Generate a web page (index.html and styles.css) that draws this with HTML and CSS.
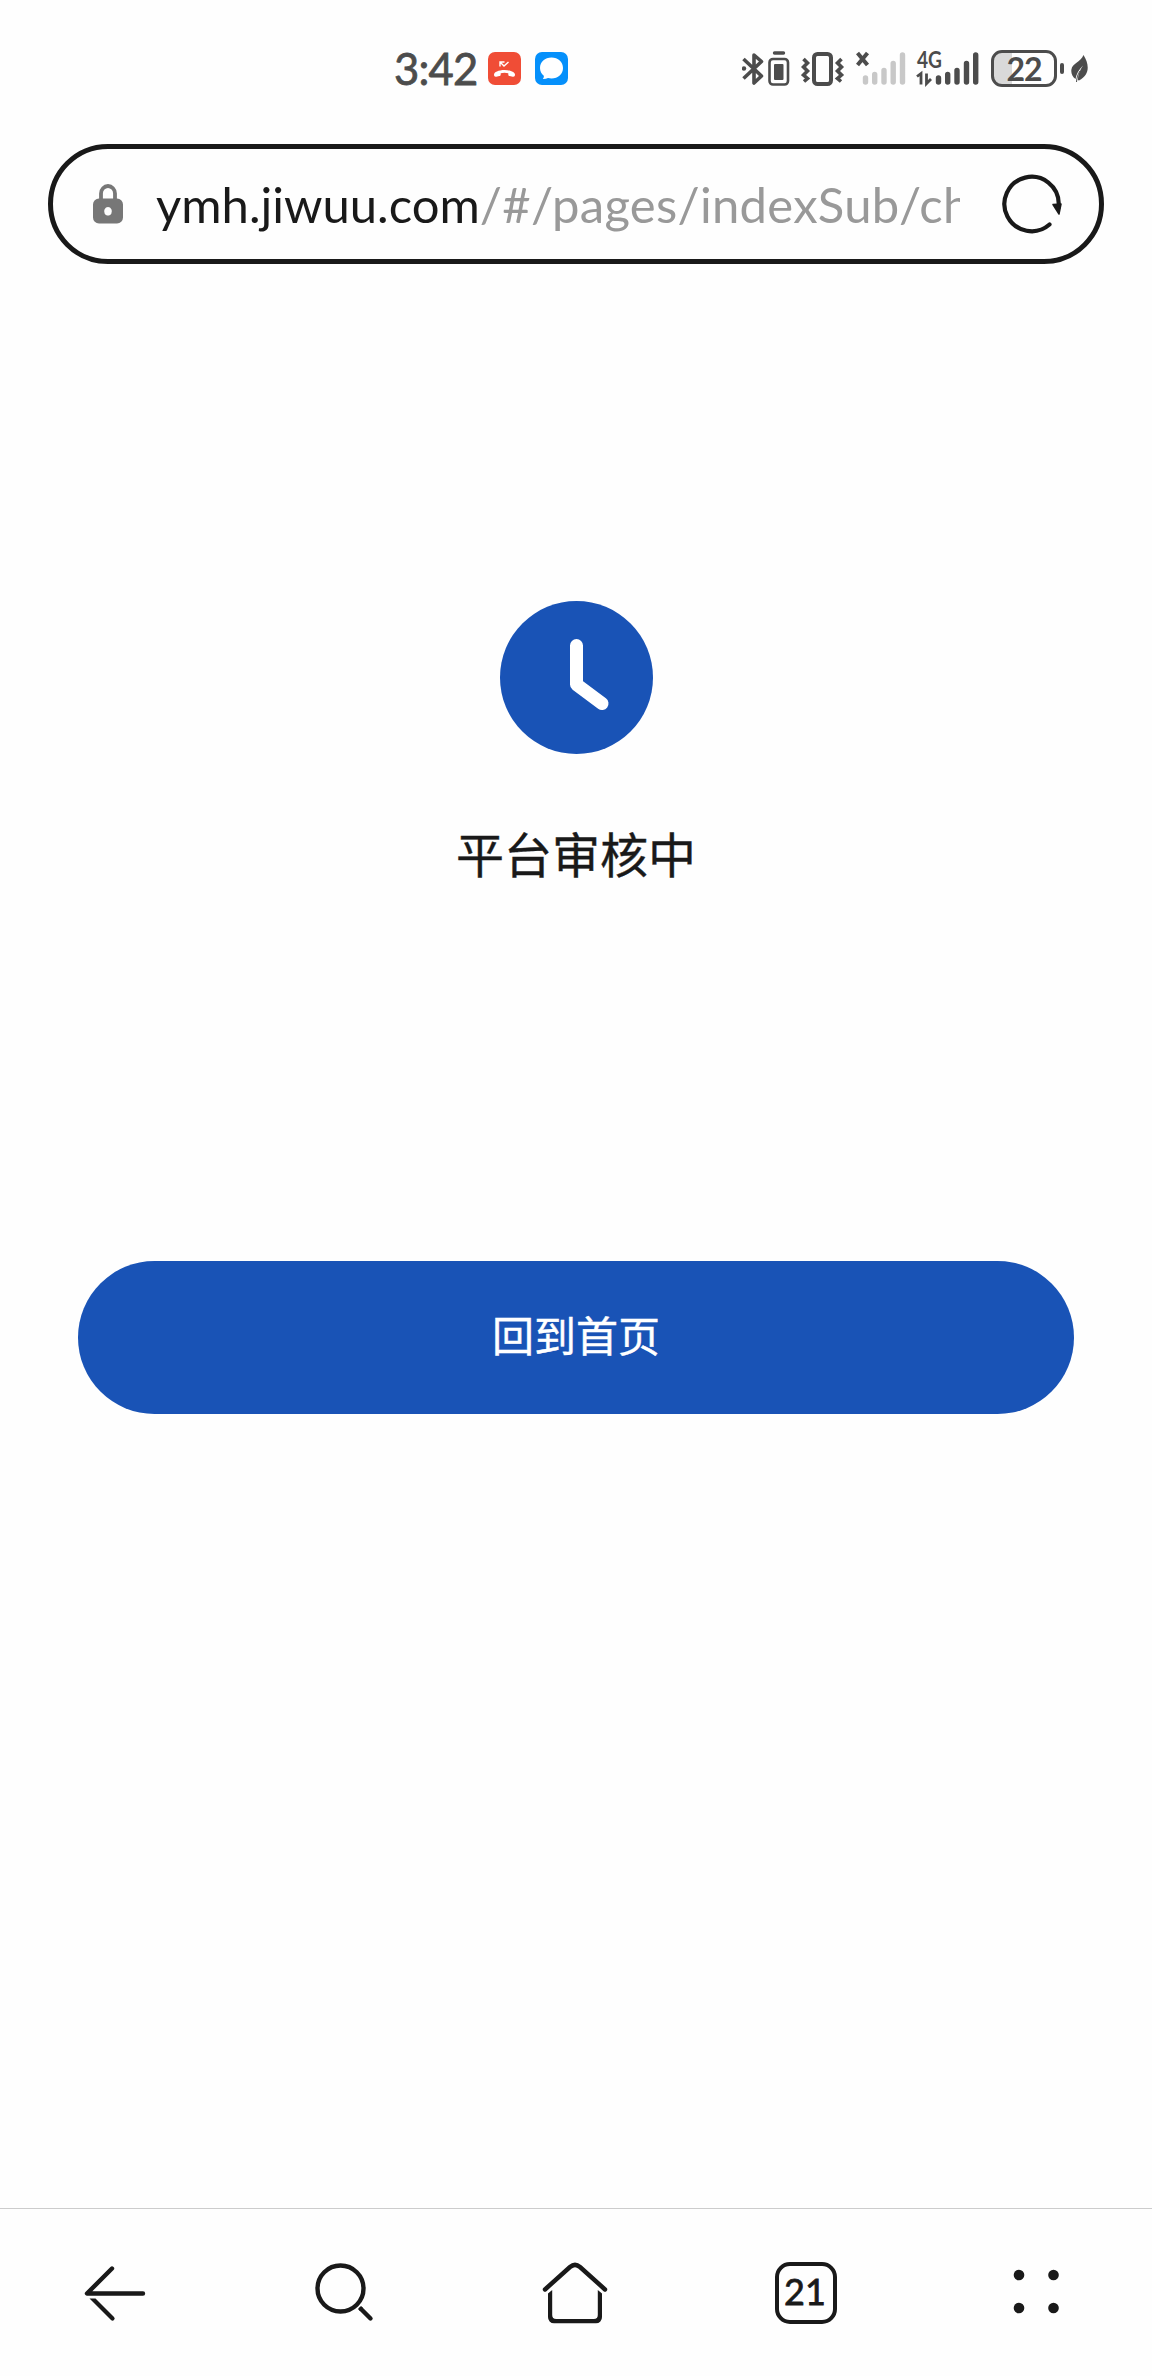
FILE: index.html
```
<!DOCTYPE html>
<html lang="zh-CN">
<head>
    <meta charset="UTF-8">
    <meta name="viewport" content="width=device-width, initial-scale=1.0">
    <title>平台审核中</title>
    <link rel="stylesheet" href="styles.css">
</head>
<body>

    <!-- Status bar -->
    <div class="status-bar">
        <div class="status-left">
            <span class="time">3:42</span>
            <svg class="app-icon" viewBox="0 0 33 33">
                <rect width="33" height="33" rx="7" fill="#f04d36"/>
                <path d="M6 22.500c0-2.300 4.500-4.500 10.500-4.500s10.500 2.200 10.500 4.500c0 1.700-.8 2.400-2.200 2.200l-3.200-.6c-1-.2-1.300-.8-1.300-1.700v-1.100c-2.400-.8-5.200-.8-7.600 0v1.100c0 .9-.3 1.500-1.300 1.700l-3.200.6c-1.400.2-2.200-.5-2.200-2.200z" fill="#fff"/>
                <path d="M12 14.500v-4.500h4.500M12.500 10.500l3.500 3.500 4.500-4" fill="none" stroke="#fff" stroke-width="1.400"/>
            </svg>
            <svg class="app-icon" viewBox="0 0 33 33">
                <rect width="33" height="33" rx="7" fill="#0590fb"/>
                <path d="M16.500 5.500c-6.600 0-11.500 4.500-11.500 10.500 0 3.300 1.500 6 3.800 7.800.2 1.300-.2 2.400-1 3.200 2 .1 3.700-.3 5.200-1 1.100.3 2.300.5 3.500.5 6.600 0 11.500-4.500 11.500-10.500s-4.900-10.500-11.500-10.500z" fill="#fff"/>
            </svg>
        </div>
        <div class="status-right">
            <svg class="bluetooth" viewBox="0 0 22 36">
                <path d="M1.500 8l18 17-7.500 7v-28l7.500 6.500-18 17" fill="none" stroke="#4c4c4c" stroke-width="3.600" stroke-linejoin="round"/>
                <circle cx="2" cy="17.500" r="2.200" fill="#4c4c4c"/>
            </svg>
            <svg class="device-battery" viewBox="0 0 22 36">
                <path d="M6.500 2h9" stroke="#4c4c4c" stroke-width="3.400" stroke-linecap="round"/>
                <rect x="1.500" y="8" width="18.500" height="25.500" rx="3.500" fill="none" stroke="#4c4c4c" stroke-width="2.600"/>
                <rect x="6" y="13" width="9.500" height="16" rx="1" fill="#4c4c4c"/>
            </svg>
            <svg class="vibrate" viewBox="0 0 44 36">
                <rect x="13" y="3" width="17" height="30" rx="3.500" fill="none" stroke="#4c4c4c" stroke-width="4"/>
                <path d="M2.500 8l4 4-4 4 4 4-4 4 4 3.500-3.500 3M40.500 8l-4 4 4 4-4 4 4 4-4 3.500 3.500 3" fill="none" stroke="#4c4c4c" stroke-width="3.600"/>
            </svg>
            <svg class="signal-off" viewBox="0 0 50 36">
                <path d="M1.500 2l10 12M11.500 2l-10 12" stroke="#4c4c4c" stroke-width="4"/>
                <path d="M9.500 27v4M18.700 23.500v7.500M28 19.500v11.500M37.200 12.500v18.500M46.500 4v27" stroke="#c8c8c8" stroke-width="5.400" stroke-linecap="round"/>
            </svg>
            <svg class="signal" viewBox="0 0 64 36">
                <text class="network" x="0" y="17" textLength="25" lengthAdjust="spacingAndGlyphs">4G</text>
                <path d="M0 25.500l4-3v11M9.500 22.500v10l4.500-4.500" fill="none" stroke="#4c4c4c" stroke-width="2.800"/>
                <path d="M21.500 27v4M30.700 23.500v7.500M40 19.500v11.500M49.500 12.500v18.500M58.700 4v27" stroke="#4c4c4c" stroke-width="5.400" stroke-linecap="round"/>
            </svg>
            <div class="battery">
                <span class="battery-level">22</span>
            </div>
            <span class="battery-tip"></span>
            <svg class="leaf" viewBox="0 0 18 30">
                <path d="M12.500 1c6 9.500 6.500 20-4.500 25.500l-1.200-.6c.2-5 2-9.500 5.200-14.400-4.300 4.500-6.700 8.500-7.500 13.500-3-2-4.700-6-4.100-9.500.9-6.500 9.600-7.500 12.100-14.500z" fill="#4c4c4c"/>
                <path d="M5.500 28c.3-4 1.300-8 3.500-11" fill="none" stroke="#4c4c4c" stroke-width="1"/>
            </svg>
        </div>
    </div>

    <!-- Address bar -->
    <div class="address-bar">
        <svg class="lock" viewBox="0 0 30 40">
            <path d="M8 16v-6.500a7 7.500 0 0 1 14 0v6.500" fill="none" stroke="#777" stroke-width="3.800"/>
            <path d="M6 14.500h18a6 6 0 0 1 6 6v13a6 6 0 0 1-6 6h-18a6 6 0 0 1-6-6v-13a6 6 0 0 1 6-6zM15 23a3.900 4.300 0 1 0 .01 0z" fill="#777" fill-rule="evenodd"/>
        </svg>
        <div class="url"><span class="host">ymh.jiwuu.com</span><span class="path">/#/pages/indexSub/ch</span></div>
        <svg class="refresh" viewBox="0 0 60 60">
            <path d="M47.500 50.500a27.200 27.200 0 1 1 9.300-20.500v3" fill="none" stroke="#191919" stroke-width="4.200" stroke-linecap="round"/>
            <path d="M51 30.500l8-.5-2 10z" fill="#191919" stroke="#191919" stroke-width="1.500" stroke-linejoin="round"/>
        </svg>
    </div>

    <!-- Page content -->
    <div class="content">
        <svg class="clock" viewBox="0 0 153 153">
            <circle cx="76.500" cy="76.500" r="76.500" fill="#1953b6"/>
            <path d="M76.500 44.500v39l25.500 19" fill="none" stroke="#fff" stroke-width="13" stroke-linecap="round" stroke-linejoin="round"/>
        </svg>
        <p class="message">平台审核中</p>
        <button class="home-button">回到首页</button>
    </div>

    <!-- Bottom toolbar -->
    <div class="toolbar">
        <div class="tool">
            <svg viewBox="0 0 68 68">
                <path d="M31 9.500l-25 25h56" fill="none" stroke="#191919" stroke-width="4.400" stroke-linecap="round" stroke-linejoin="round"/>
                <path d="M8.500 39.500h6l18.500 18.500a2 2 0 0 1-3 3z" fill="#191919"/>
            </svg>
        </div>
        <div class="tool">
            <svg viewBox="0 0 68 68">
                <circle cx="28.500" cy="29.500" r="23" fill="none" stroke="#191919" stroke-width="4.400"/>
                <path d="M47.500 48.500l2 2" stroke="#191919" stroke-width="4.400"/>
                <path d="M49 50l9.500 9.500" stroke="#191919" stroke-width="4.400" stroke-linecap="round"/>
            </svg>
        </div>
        <div class="tool">
            <svg viewBox="0 0 68 68">
                <path d="M3 30.500l25-22.500c3.500-3 6.500-3 10 0l25 22.500" fill="none" stroke="#191919" stroke-width="4.400" stroke-linecap="round"/>
                <path d="M6 34.500l4.200-3.500v25a4 4 0 0 0 4 4h37.600a4 4 0 0 0 4-4v-25l4.200 3.500v23.500a6 6 0 0 1-6 6.300h-42a6 6 0 0 1-6-6.300z" fill="#191919"/>
            </svg>
        </div>
        <div class="tool">
            <span class="tabs">21</span>
        </div>
        <div class="tool">
            <svg viewBox="0 0 68 68" fill="#191919">
                <circle cx="16" cy="16" r="5.300"/>
                <circle cx="50.500" cy="16" r="5.300"/>
                <circle cx="16" cy="49" r="5.300"/>
                <circle cx="50.500" cy="49" r="5.300"/>
            </svg>
        </div>
    </div>

</body>
</html>
```
FILE: styles.css
```
* {
    margin: 0;
    padding: 0;
    box-sizing: border-box;
}

body {
    display: flex;
    flex-direction: column;
    height: 2376px;
    background: #fefefe;
    color: #191919;
    font-family: Lato, "Noto Sans CJK SC", sans-serif;
}

svg {
    display: block;
    flex-shrink: 0;
}

/* Status bar */
.status-bar {
    display: flex;
    justify-content: space-between;
    height: 144px;
    padding: 50px 63px 0 394px;
    color: #4c4c4c;
}

.status-left,
.status-right {
    display: flex;
    align-items: center;
    height: 37px;
}

.time {
    width: 94px;
    font-size: 43.5px;
    line-height: 37px;
    letter-spacing: -0.8px;
    white-space: nowrap;
    -webkit-text-stroke: 0.8px #4c4c4c;
}

.app-icon {
    width: 33px;
    height: 33px;
    margin-right: 14px;
}

.bluetooth,
.device-battery {
    width: 22px;
    height: 36px;
}

.bluetooth {
    margin-right: 4px;
}

.vibrate {
    width: 44px;
    height: 36px;
    margin-left: 11px;
}

.signal-off {
    width: 50px;
    height: 36px;
    margin-left: 11px;
}

.signal {
    width: 64px;
    height: 36px;
    margin-left: 11px;
    overflow: visible;
}

.network {
    font-family: Lato, sans-serif;
    font-size: 22px;
    font-weight: bold;
    fill: #4c4c4c;
}

.battery {
    display: flex;
    align-items: center;
    justify-content: center;
    width: 66px;
    height: 37px;
    margin-left: 10px;
    border: 3px solid #4c4c4c;
    border-radius: 11px;
    background: linear-gradient(to right, #d9d9d9 18px, transparent 18px);
}

.battery-level {
    font-size: 32px;
    font-weight: bold;
    line-height: 31px;
    letter-spacing: -1px;
}

.battery-tip {
    width: 4px;
    height: 11px;
    margin-left: 3px;
    border-radius: 2px;
    background: #4c4c4c;
}

.leaf {
    width: 18px;
    height: 30px;
    margin-left: 7px;
}

/* Address bar */
.address-bar {
    display: flex;
    align-items: center;
    height: 120px;
    margin: 0 48px;
    padding: 0 37px 0 40px;
    border: 5px solid #191919;
    border-radius: 60px;
}

.lock {
    width: 30px;
    height: 40px;
}

.url {
    width: 804px;
    margin: 0 42px 0 33px;
    overflow: hidden;
    font-size: 49px;
    line-height: 70px;
    white-space: nowrap;
}

.path {
    color: #999;
    letter-spacing: 0.3px;
}

.refresh {
    width: 60px;
    height: 60px;
}

/* Page content */
.content {
    display: flex;
    flex: 1;
    flex-direction: column;
    align-items: center;
    padding: 337px 78px 0;
}

.clock {
    width: 153px;
    height: 153px;
}

.message {
    margin-top: 63px;
    font-family: "Noto Sans CJK SC", sans-serif;
    font-size: 48px;
    line-height: 70px;
    -webkit-text-stroke: 0.4px #191919;
}

.home-button {
    width: 100%;
    height: 153px;
    margin-top: 374px;
    padding-bottom: 8px;
    border: none;
    border-radius: 77px;
    background: #1953b6;
    color: #fff;
    font-family: "Noto Sans CJK SC", sans-serif;
    font-size: 42px;
    -webkit-text-stroke: 0.4px #fff;
}

/* Bottom toolbar */
.toolbar {
    display: flex;
    height: 168px;
    border-top: 1px solid #ccc;
}

.tool {
    display: flex;
    flex: 1;
    align-items: center;
    justify-content: center;
}

.tool svg {
    width: 68px;
    height: 68px;
}

.tabs {
    width: 62px;
    height: 62px;
    padding-right: 3px;
    border: 4.5px solid #191919;
    border-radius: 15px;
    font-size: 36px;
    line-height: 51px;
    text-align: center;
    -webkit-text-stroke: 0.8px #191919;
}
```
